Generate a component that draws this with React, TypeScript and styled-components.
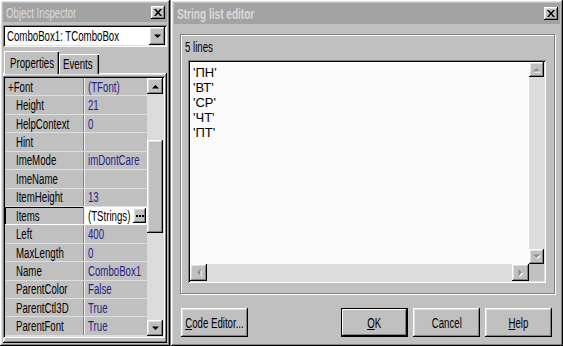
import React from "react";
import styled, { createGlobalStyle, css } from "styled-components";

const GlobalStyle = createGlobalStyle`
  html, body {
    margin: 0;
    padding: 0;
  }
  body {
    background: #808080;
    font-family: "Liberation Sans", Arial, sans-serif;
    font-size: 14px;
    color: #000;
  }
`;

const raised = css`
  box-shadow: inset -1px -1px #000, inset 1px 1px #fff, inset -2px -2px #808080,
    inset 2px 2px #dfdfdf;
`;

const sunken = css`
  box-shadow: inset 1px 1px #808080, inset -1px -1px #fff, inset 2px 2px #000,
    inset -2px -2px #dfdfdf;
`;

// the old screenshot is squeezed sideways, so the UI text is drawn condensed
const Txt = styled.span<{ $center?: boolean; $scale?: number }>`
  display: inline-block;
  white-space: nowrap;
  transform: scaleX(${(p) => p.$scale ?? 0.69});
  transform-origin: ${(p) => (p.$center ? "center" : "left")} center;
`;

const Desktop = styled.div`
  display: flex;
  gap: 1px;
  width: 563px;
  height: 346px;
  overflow: hidden;
`;

const Window = styled.div<{ $width?: number }>`
  ${raised}
  background: #c0c0c0;
  padding: 3px;
  box-sizing: border-box;
  height: 100%;
  display: flex;
  flex-direction: column;
  ${(p) => (p.$width ? `width: ${p.$width}px; flex: none;` : `flex: 1;`)}
`;

const TitleBar = styled.div<{ $bold?: boolean; $height: number }>`
  flex: none;
  height: ${(p) => p.$height}px;
  background: #a3a3a3;
  color: #dadada;
  display: flex;
  align-items: center;
  justify-content: space-between;
  padding: 0 2px 0 3px;
  font-weight: ${(p) => (p.$bold ? 700 : 400)};
`;

const CloseButton = styled.div`
  ${raised}
  background: #c0c0c0;
  width: 14px;
  height: 13px;
  display: flex;
  align-items: center;
  justify-content: center;
`;

/* ---------- Object Inspector ---------- */

const Combo = styled.div`
  ${sunken}
  flex: none;
  margin-top: 3px;
  height: 22px;
  background: #fff;
  display: flex;
  align-items: center;
  padding: 2px;
  box-sizing: border-box;
`;

const ComboText = styled.div`
  flex: 1;
  min-width: 0;
  padding-left: 2px;
`;

const DropButton = styled.div`
  ${raised}
  background: #c0c0c0;
  width: 16px;
  height: 18px;
  display: flex;
  align-items: center;
  justify-content: center;
`;

const Tabs = styled.div`
  flex: none;
  margin-top: 4px;
  height: 23px;
  display: flex;
  align-items: flex-end;
  padding-left: 1px;
`;

const Tab = styled.div<{ $active?: boolean; $width: number }>`
  width: ${(p) => p.$width}px;
  height: ${(p) => (p.$active ? 23 : 20)}px;
  padding-left: ${(p) => (p.$active ? 6 : 4)}px;
  box-sizing: border-box;
  display: flex;
  align-items: center;
  background: #c0c0c0;
  box-shadow: inset 1px 1px #fff, inset -1px 0 #000, inset -2px 0 #808080;
  position: relative;
  z-index: ${(p) => (p.$active ? 1 : 0)};
`;

const TabPage = styled.div`
  ${raised}
  flex: 1;
  display: flex;
  padding: 3px 2px 5px 0;
  margin-top: -1px;
`;

const Inspector = styled.div`
  ${sunken}
  flex: 1;
  display: flex;
  padding: 2px;
  background: #c0c0c0;
`;

const PropList = styled.div`
  flex: 1;
  min-width: 0;
  display: flex;
  flex-direction: column;
`;

const PropRow = styled.div<{ $selected?: boolean }>`
  flex: 1;
  display: grid;
  grid-template-columns: 79px 1fr;
  border-bottom: 1px solid #dedede;
  ${(p) => p.$selected && `box-shadow: inset 1px 1px #000; border-bottom-color: #fff;`}
`;

const PropName = styled.div<{ $indent: number }>`
  display: flex;
  align-items: center;
  padding-left: ${(p) => p.$indent}px;
  border-right: 1px solid #808080;
  overflow: hidden;
`;

const PropValue = styled.div<{ $selected?: boolean }>`
  display: flex;
  align-items: center;
  padding: 0 1px 0 3px;
  border-left: 1px solid #f0f0f0;
  color: ${(p) => (p.$selected ? "#000" : "#1f238a")};
  background: ${(p) => (p.$selected ? "#fff" : "transparent")};
  overflow: hidden;
`;

const ValueText = styled.div`
  flex: 1;
  min-width: 0;
`;

const EllipsisButton = styled.div`
  ${raised}
  flex: none;
  background: #c0c0c0;
  width: 13px;
  height: 15px;
  display: flex;
  align-items: center;
  justify-content: center;
`;

const VScroll = styled.div<{ $width: number }>`
  flex: none;
  width: ${(p) => p.$width}px;
  display: flex;
  flex-direction: column;
`;

const HScroll = styled.div`
  display: flex;
`;

const ScrollArrow = styled.div<{ $size: number }>`
  ${raised}
  flex: none;
  width: ${(p) => p.$size}px;
  height: ${(p) => p.$size}px;
  background: #c0c0c0;
  display: flex;
  align-items: center;
  justify-content: center;
`;

const Track = styled.div<{ $vertical?: boolean }>`
  flex: 1;
  background: #dcdcdc;
  display: flex;
  flex-direction: ${(p) => (p.$vertical ? "column" : "row")};
`;

const Thumb = styled.div<{ $offset: number; $length: number }>`
  ${raised}
  background: #c0c0c0;
  margin-top: ${(p) => p.$offset}px;
  height: ${(p) => p.$length}px;
  flex: none;
`;

/* ---------- String list editor ---------- */

const DialogBody = styled.div`
  flex: 1;
  display: flex;
  flex-direction: column;
  padding: 10px 5px 3px 6px;
`;

const GroupBox = styled.div`
  flex: 1;
  display: flex;
  flex-direction: column;
  border: 1px solid #808080;
  box-shadow: 1px 1px 0 #fff, inset 1px 1px 0 #fff;
  padding: 5px 8px 10px 7px;
`;

const GroupLabel = styled.div`
  height: 14px;
  line-height: 14px;
  margin-bottom: 6px;
  margin-left: -3px;
`;

const Memo = styled.div`
  ${sunken}
  flex: 1;
  background: #fbfbfb;
  padding: 2px;
  display: grid;
  grid-template-columns: 1fr 15px;
  grid-template-rows: 1fr 17px;
`;

const MemoText = styled.div`
  padding: 3px 3px;
  font-size: 13px;
  line-height: 15px;
`;

const Corner = styled.div`
  background: #c0c0c0;
`;

const ButtonRow = styled.div`
  flex: none;
  margin-top: 14px;
  margin-bottom: 3px;
  display: flex;
  gap: 5px;
  padding-left: 1px;
  padding-right: 3px;
`;

const Spacer = styled.div`
  flex: 1;
`;

const Button = styled.div<{ $default?: boolean }>`
  width: 67px;
  height: 29px;
  box-sizing: border-box;
  background: #c0c0c0;
  display: flex;
  align-items: center;
  justify-content: center;
  ${(p) =>
    p.$default
      ? `border: 1px solid #000; box-shadow: inset -1px -1px #000, inset 1px 1px #fff, inset -2px -2px #808080;`
      : `box-shadow: inset -1px -1px #000, inset 1px 1px #fff, inset -2px -2px #808080, inset 2px 2px #dfdfdf;`}
`;

/* ---------- drawings ---------- */

const rotations = { up: 0, right: 90, down: 180, left: 270 };

function Arrow({ dir, disabled }: { dir: "up" | "down" | "left" | "right"; disabled?: boolean }) {
  const r = rotations[dir];
  return (
    <svg width="9" height="9" viewBox="0 0 9 9">
      {disabled && (
        <polygon points="1,6.5 8,6.5 4.5,3" fill="#fff" transform={`translate(1 1) rotate(${r} 4.5 4.5)`} />
      )}
      <polygon
        points="1,6.5 8,6.5 4.5,3"
        fill={disabled ? "#8c8c8c" : "#000"}
        transform={`rotate(${r} 4.5 4.5)`}
      />
    </svg>
  );
}

function CloseGlyph() {
  return (
    <svg width="8" height="7" viewBox="0 0 8 7">
      <path d="M0 0H2L4 2.4L6 0H8L5.1 3.5L8 7H6L4 4.6L2 7H0L2.9 3.5Z" fill="#000" />
    </svg>
  );
}

function Dots() {
  return (
    <svg width="8" height="2" viewBox="0 0 8 2">
      <rect x="0" y="0" width="2" height="2" fill="#000" />
      <rect x="3" y="0" width="2" height="2" fill="#000" />
      <rect x="6" y="0" width="2" height="2" fill="#000" />
    </svg>
  );
}

const properties = [
  { name: "+Font", value: "(TFont)", indent: 3 },
  { name: "Height", value: "21" },
  { name: "HelpContext", value: "0" },
  { name: "Hint", value: "" },
  { name: "ImeMode", value: "imDontCare" },
  { name: "ImeName", value: "" },
  { name: "ItemHeight", value: "13" },
  { name: "Items", value: "(TStrings)", selected: true },
  { name: "Left", value: "400" },
  { name: "MaxLength", value: "0" },
  { name: "Name", value: "ComboBox1" },
  { name: "ParentColor", value: "False" },
  { name: "ParentCtl3D", value: "True" },
  { name: "ParentFont", value: "True" },
];

const lines = ["'ПН'", "'ВТ'", "'СР'", "'ЧТ'", "'ПТ'"];

export default function App() {
  return (
    <>
      <GlobalStyle />
      <Desktop>
        <Window $width={170}>
          <TitleBar $height={19}>
            <Txt>Object Inspector</Txt>
            <CloseButton>
              <CloseGlyph />
            </CloseButton>
          </TitleBar>
          <Combo>
            <ComboText>
              <Txt>ComboBox1: TComboBox</Txt>
            </ComboText>
            <DropButton>
              <Arrow dir="down" />
            </DropButton>
          </Combo>
          <Tabs>
            <Tab $active $width={55}>
              <Txt>Properties</Txt>
            </Tab>
            <Tab $width={40}>
              <Txt>Events</Txt>
            </Tab>
          </Tabs>
          <TabPage>
            <Inspector>
              <PropList>
                {properties.map((p) => (
                  <PropRow key={p.name} $selected={p.selected}>
                    <PropName $indent={p.indent ?? 11}>
                      <Txt>{p.name}</Txt>
                    </PropName>
                    <PropValue $selected={p.selected}>
                      <ValueText>
                        <Txt>{p.value}</Txt>
                      </ValueText>
                      {p.selected && (
                        <EllipsisButton>
                          <Dots />
                        </EllipsisButton>
                      )}
                    </PropValue>
                  </PropRow>
                ))}
              </PropList>
              <VScroll $width={16}>
                <ScrollArrow $size={16}>
                  <Arrow dir="up" />
                </ScrollArrow>
                <Track $vertical>
                  <Thumb $offset={46} $length={93} />
                </Track>
                <ScrollArrow $size={16}>
                  <Arrow dir="down" />
                </ScrollArrow>
              </VScroll>
            </Inspector>
          </TabPage>
        </Window>

        <Window>
          <TitleBar $height={21} $bold>
            <Txt $scale={0.72}>String list editor</Txt>
            <CloseButton>
              <CloseGlyph />
            </CloseButton>
          </TitleBar>
          <DialogBody>
            <GroupBox>
              <GroupLabel>
                <Txt>5 lines</Txt>
              </GroupLabel>
              <Memo>
                <MemoText>
                  {lines.map((l) => (
                    <div key={l}>{l}</div>
                  ))}
                </MemoText>
                <VScroll $width={15}>
                  <ScrollArrow $size={15}>
                    <Arrow dir="up" disabled />
                  </ScrollArrow>
                  <Track $vertical />
                  <ScrollArrow $size={15}>
                    <Arrow dir="down" disabled />
                  </ScrollArrow>
                </VScroll>
                <HScroll>
                  <ScrollArrow $size={17}>
                    <Arrow dir="left" disabled />
                  </ScrollArrow>
                  <Track />
                  <ScrollArrow $size={17}>
                    <Arrow dir="right" disabled />
                  </ScrollArrow>
                </HScroll>
                <Corner />
              </Memo>
            </GroupBox>
            <ButtonRow>
              <Button>
                <Txt $center>
                  <u>C</u>ode Editor...
                </Txt>
              </Button>
              <Spacer />
              <Button $default>
                <Txt $center>
                  <u>O</u>K
                </Txt>
              </Button>
              <Button>
                <Txt $center>Cancel</Txt>
              </Button>
              <Button>
                <Txt $center>
                  <u>H</u>elp
                </Txt>
              </Button>
            </ButtonRow>
          </DialogBody>
        </Window>
      </Desktop>
    </>
  );
}
